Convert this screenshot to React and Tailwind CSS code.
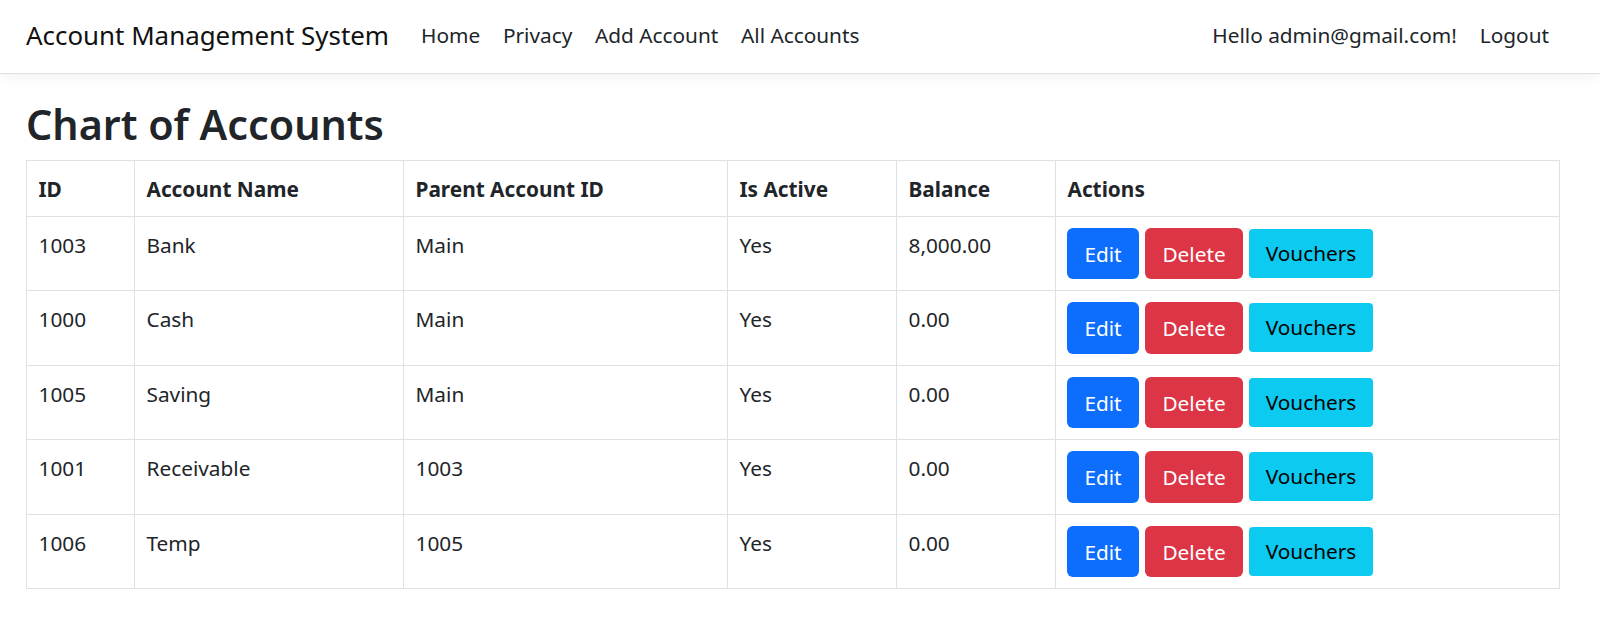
const rows = [
  ["1003", "Bank", "Main", "Yes", "8,000.00", "h-[74px]", "h-[51px]"],
  ["1000", "Cash", "Main", "Yes", "0.00", "h-[75px]", "h-[52px]"],
  ["1005", "Saving", "Main", "Yes", "0.00", "h-[74px]", "h-[51px]"],
  ["1001", "Receivable", "1003", "Yes", "0.00", "h-[75px]", "h-[52px]"],
  ["1006", "Temp", "1005", "Yes", "0.00", "h-[74px]", "h-[51px]"],
];
const border = "border border-[#dee2e6] align-top";
const td = border + " px-[11.5px] pt-[13px] pb-[11px]";
const th = td + " text-left font-bold";
export default function App() {
  return (
    <div className="min-h-[643px] bg-white text-[#212529] text-[20.8px] leading-[31px] font-['Noto_Sans',sans-serif]">
      <nav className="h-[74px] flex items-center pb-[2px] pl-[26px] pr-[25px] border-b border-[#e0e0e0] shadow-[0_4px_12px_rgba(0,0,0,0.05)]">
        <span className="text-[25.9px] mr-[32px] text-[#111]">Account Management System</span>
        <div className="flex gap-[22.7px]"><span>Home</span><span>Privacy</span><span>Add Account</span><span>All Accounts</span></div>
        <div className="ml-auto flex gap-[23px] mr-[26px]"><span>Hello admin@gmail.com!</span><span>Logout</span></div>
      </nav>
      <main className="pl-[26px]">
        <h1 className="text-[41.25px] leading-[50px] font-semibold mt-[25px] mb-[11px]">Chart of Accounts</h1>
        <table className="w-[1534px] border-collapse table-fixed">
          <thead>
            <tr className="h-[56px]">
              <th className={th + " w-[108px]"}>ID</th>
              <th className={th + " w-[269px]"}>Account Name</th>
              <th className={th + " w-[324px]"}>Parent Account ID</th>
              <th className={th + " w-[169px]"}>Is Active</th>
              <th className={th + " w-[159px]"}>Balance</th>
              <th className={th}>Actions</th>
            </tr>
          </thead>
          <tbody>
            {rows.map((r) => (
              <tr key={r[0]} className={r[5]}>
                {r.slice(0, 5).map((c, i) => <td key={i} className={td}>{c}</td>)}
                <td className={border + " px-[11px] py-[11px]"}>
                  <div className="flex gap-[6px] items-start">
                    <button className={r[6] + " w-[72px] pt-[1px] rounded-[6px] bg-[#0d6efd] text-white"}>Edit</button>
                    <button className={r[6] + " w-[98px] pt-[1px] rounded-[6px] bg-[#dc3545] text-white"}>Delete</button>
                    <button className="h-[49px] mt-[1px] w-[124px] rounded-[4px] bg-[#0dcaf0] text-black">Vouchers</button>
                  </div>
                </td>
              </tr>
            ))}
          </tbody>
        </table>
      </main>
    </div>
  );
}
